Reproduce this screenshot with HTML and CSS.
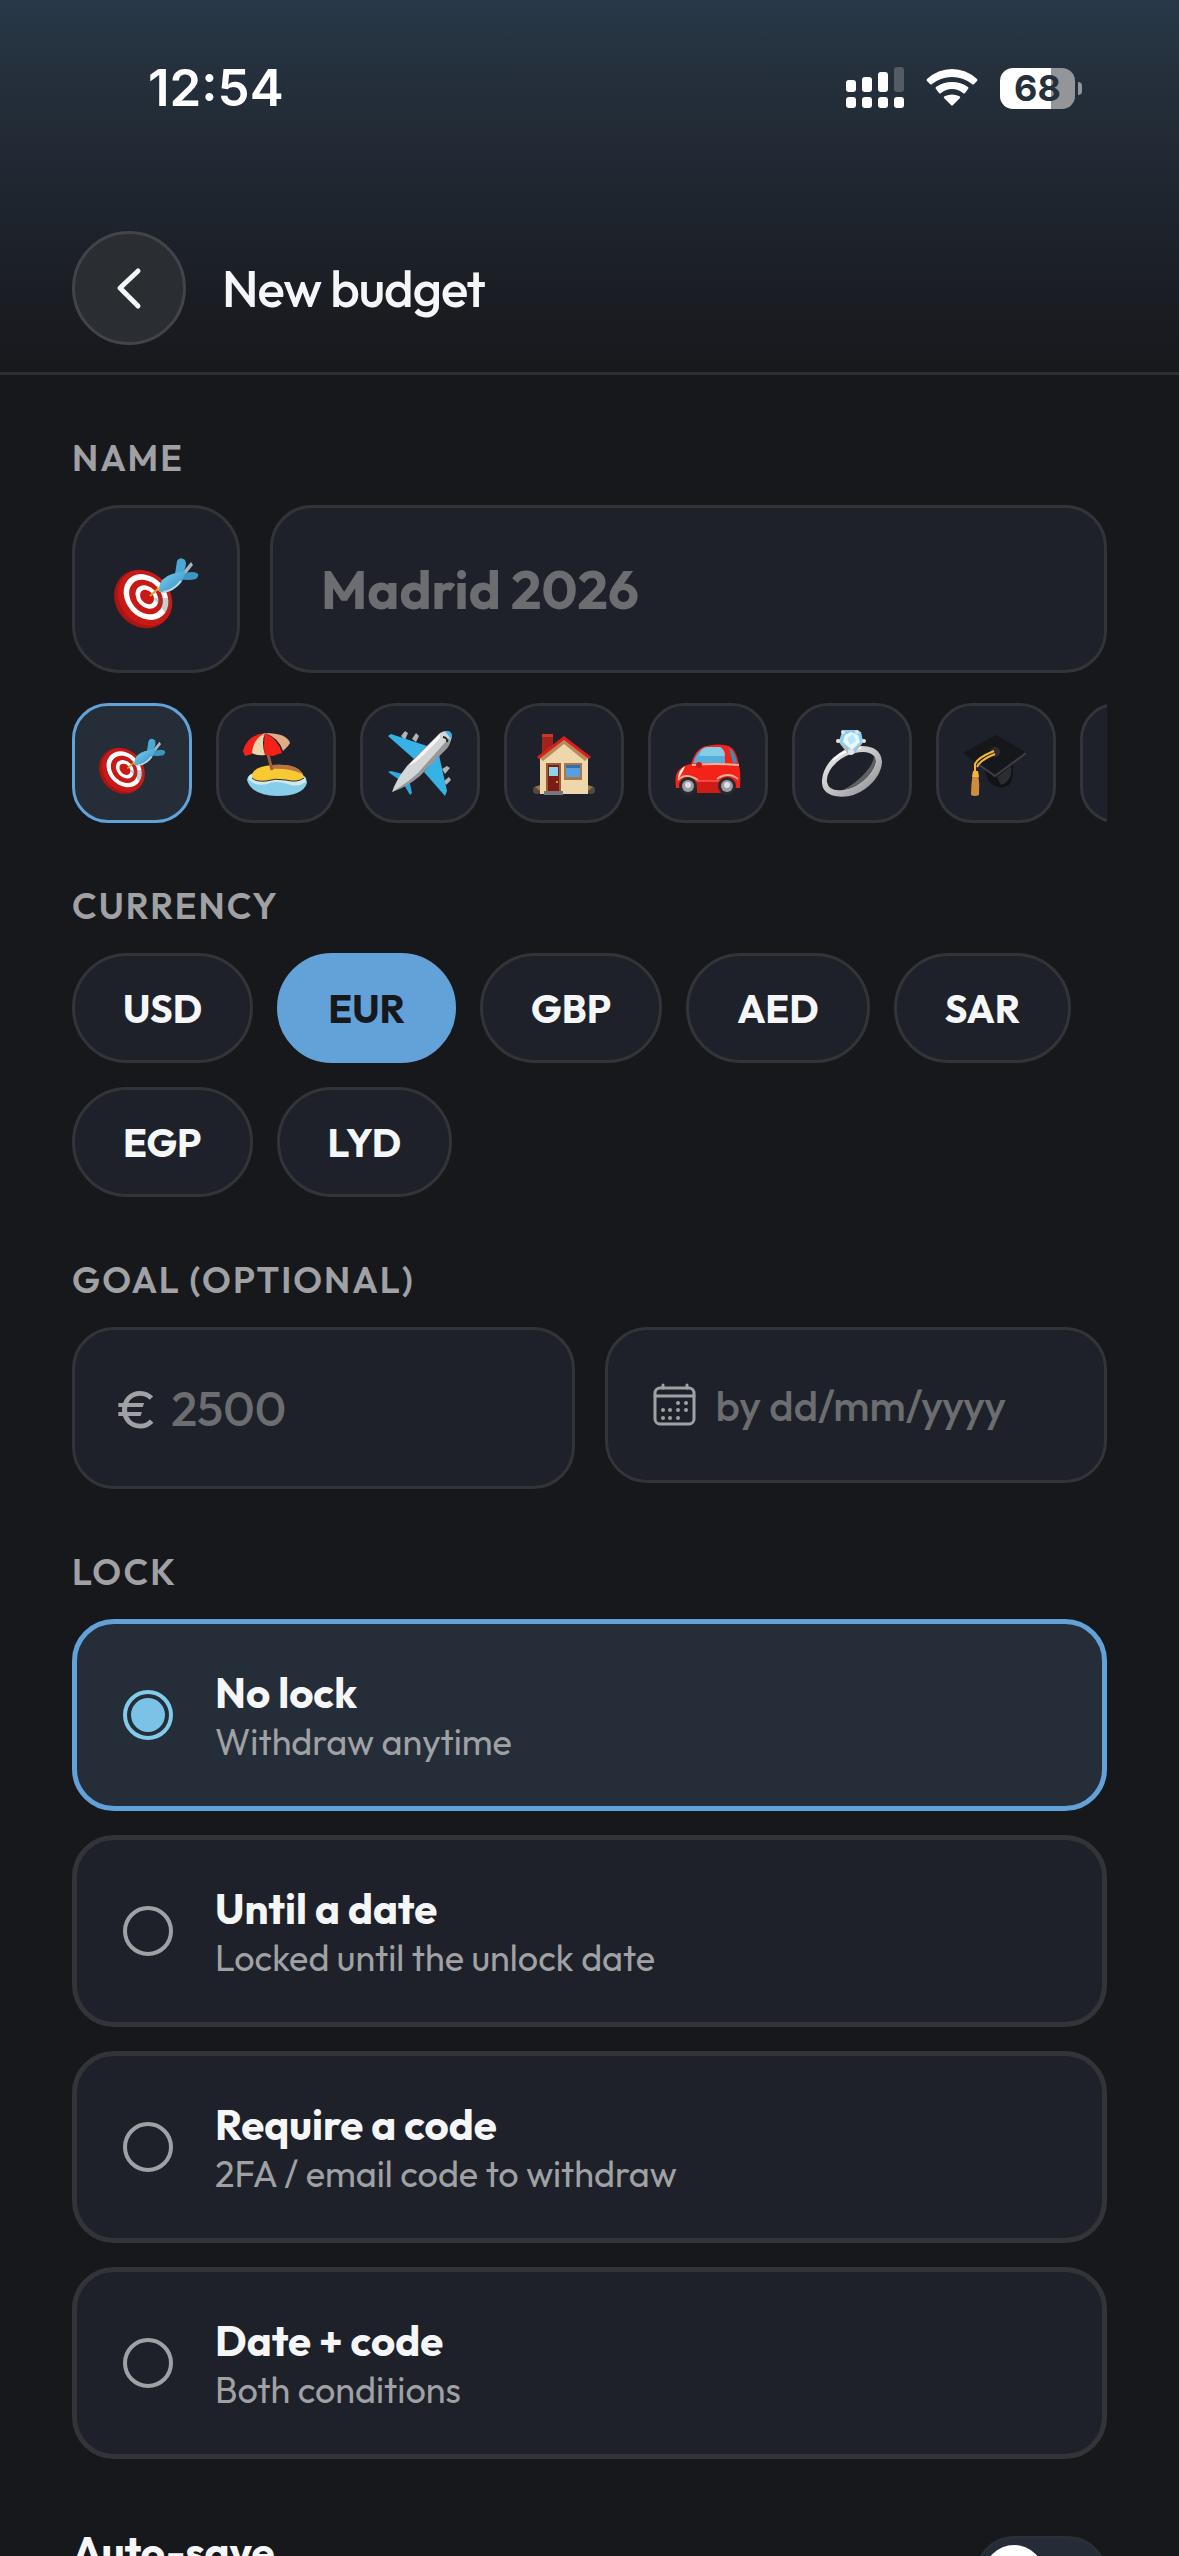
FILE: index.html
```html
<!DOCTYPE html>
<html lang="en">
<head>
  <meta charset="UTF-8">
  <meta name="viewport" content="width=device-width, initial-scale=1.0">
  <title>New budget</title>
  <link rel="stylesheet" href="styles.css">
</head>
<body>
  <!-- Shared icon shapes -->
  <svg class="sprite" aria-hidden="true">
    <defs>
      <linearGradient id="metal" x1="0" y1="0" x2="1" y2="1">
        <stop offset="0" stop-color="#f4f4f4"/>
        <stop offset="0.5" stop-color="#c4c4c6"/>
        <stop offset="1" stop-color="#85868a"/>
      </linearGradient>
      <linearGradient id="dart" x1="0" y1="0" x2="1" y2="1">
        <stop offset="0" stop-color="#7fd0f0"/>
        <stop offset="1" stop-color="#2f8fc4"/>
      </linearGradient>
    </defs>
    <symbol id="icon-target" viewBox="0 0 84 84">
      <ellipse cx="28" cy="53" rx="26" ry="30" transform="rotate(-42 28 53)" fill="#7d1613"/>
      <ellipse cx="29" cy="52" rx="27" ry="31" transform="rotate(-42 29 52)" fill="#a81512"/>
      <ellipse cx="31" cy="51" rx="25" ry="30" transform="rotate(-42 31 51)" fill="#c71a17"/>
      <ellipse cx="32" cy="50" rx="20" ry="25" transform="rotate(-42 32 50)" fill="#fff"/>
      <ellipse cx="32" cy="50" rx="15" ry="19" transform="rotate(-42 32 50)" fill="#c71a17"/>
      <ellipse cx="33" cy="50" rx="10" ry="13" transform="rotate(-42 33 50)" fill="#fff"/>
      <ellipse cx="33" cy="50" rx="6" ry="8" transform="rotate(-42 33 50)" fill="#c71a17"/>
      <path d="M38 51 L57 51 Q58 62 51 66 L46 58Z" fill="#55585e" opacity="0.3"/>
      <path d="M36 49 L45 41" stroke="#dfa02c" stroke-width="2"/>
      <path d="M43 39 L49 45 L45 44Z" fill="#f0b83c" stroke="#f0b83c"/>
      <path d="M61 27 L63 14 Q66 9 71 13 Q74 18 68 27Z" fill="#4aa8d6"/>
      <path d="M68 26 L77 15 L79 18 L71 28Z" fill="#a8b6c2"/>
      <path d="M66 29 Q75 23 83 26 Q86 28 82 32 Q74 34 66 32Z" fill="#3c95c2"/>
      <path d="M45 41 Q46 31 58 27 L71 24 Q71 33 64 39 Q54 48 45 44Z" fill="url(#dart)"/>
      <path d="M49 45 Q59 44 67 34" stroke="#c6d3dc" stroke-width="2" fill="none"/>
    </symbol>
    <symbol id="icon-beach" viewBox="0 0 66 66">
      <path d="M4 50 Q5 43 14 43 H54 Q64 45 64 53 Q60 66 34 66 Q8 65 4 50Z" fill="#87cfe9"/>
      <path d="M5 49 Q6 43 14 43 H54 Q63 45 63 52 Q54 58 45 54 Q32 50 24 54 Q12 57 5 49Z" fill="#d3e9e6"/>
      <path d="M9 47 Q9 36 30 35 Q56 33 61 47 Q54 53 43 50 Q32 48 23 51 Q13 52 9 47Z" fill="#f9c933"/>
      <path d="M28 35 Q54 33 60 44 Q46 38 28 39Z" fill="#b57543"/>
      <path d="M9 48 Q13 52 23 51 Q32 48 43 50 Q54 53 61 48" stroke="#2a2c2c" fill="none"/>
      <path d="M24 20 L29 40" stroke="#a05c3e" stroke-width="3"/>
      <path d="M0 21 Q4 5 22 3 L9 24 L2 26Z" fill="#f52219"/>
      <path d="M22 3 Q20 15 22 25 L30 26 Q35 24 39 23 Q35 9 22 3Z" fill="#f52219"/>
      <path d="M22 3 Q10 9 9 23 Q14 26 22 25 Q18 12 22 3Z" fill="#efd3aa"/>
      <path d="M22 3 Q44 3 47 13 L45 16 L40 21 Q36 8 22 3Z" fill="#e0ab85"/>
    </symbol>
    <symbol id="icon-plane" viewBox="0 0 66 66">
      <path d="M14 6 L18 1 L21 3 L18 10Z M25 9 L29 3 L32 6 L29 12Z M55 39 L60 36 L63 38 L58 44Z M57 51 L62 47 L64 50 L59 55Z" fill="#aeb4b8"/>
      <path d="M1 6 L4 4 L40 16 L27 29Z" fill="#37b2e4"/>
      <path d="M52 25 L60 61 L58 66 L37 42Z" fill="#37b2e4"/>
      <path d="M1 42 L4 41 L20 45 L14 51Z M22 49 L25 63 L23 65 L16 53Z" fill="#2ea8dc"/>
      <path d="M53 3 Q60 -1 64 3 Q66 9 60 18 L32 46 Q17 57 5 62 Q9 50 20 36Z" fill="#d3d5d7"/>
      <path d="M62 8 L31 43 Q20 53 5 62 Q20 57 33 46 L61 17 Q65 11 62 8Z" fill="#95989b"/>
      <path d="M53 4 L22 35 Q27 36 53 8Z" fill="#f7f8f8"/>
      <path d="M58 1 Q62 0 64 3 Q66 6 64 9Z" fill="#37b2e4"/>
      <path d="M56 7 Q61 8 60 12" stroke="#222" stroke-width="2" fill="none"/>
    </symbol>
    <symbol id="icon-house" viewBox="0 0 66 66">
      <circle cx="6" cy="60" r="4" fill="#514b41"/>
      <circle cx="60" cy="60" r="4" fill="#514b41"/>
      <path d="M4 57 L9 55 V61Z M62 57 L57 55 V61Z" fill="#a07246"/>
      <path d="M11 4 H22 V16 L11 26Z" fill="#a4221e"/>
      <path d="M11 4 H22 V7 H11Z" fill="#c9362c"/>
      <path d="M9 28 L33 8 L57 28 V64 H9Z" fill="#efd7ad"/>
      <path d="M9 28 L33 9 L57 28 L54 31 L33 14 L12 31Z" fill="#b98c5c"/>
      <path d="M7 28 L33 8 L59 28" stroke="#d81f1c" stroke-width="3" fill="none"/>
      <path d="M15 33 H30 V63 H15Z" fill="#9b5a33"/>
      <path d="M17 35 H28 V62 H17Z" fill="#7c1c17"/>
      <path d="M18 37 H27 V46 H18Z" fill="#8bd3ee"/>
      <path d="M33 33 H51 V50 H33Z" fill="#a8774a"/>
      <path d="M35 35 H49 V47 H35Z" fill="#579fdd"/>
      <path d="M35 35 H49 V38 H35Z" fill="#2f70b4"/>
      <path d="M13 61 H32 V65 H13Z" fill="#77777c"/>
      <circle cx="26" cy="52" r="1" fill="#f0c14a"/>
    </symbol>
    <symbol id="icon-car" viewBox="0 0 66 66">
      <path d="M16 34 Q21 18 31 16 Q43 13 54 16 Q62 20 64 36 Q66 42 65 58 H1 Q-1 44 4 40 Q9 35 16 34Z" fill="#f5221a"/>
      <path d="M18 33 Q22 20 31 17 H45 Q50 18 50 33Z" fill="#56aeda"/>
      <path d="M26 20 Q29 17 33 17 H45 Q50 20 50 26 H24Z" fill="#83cde9"/>
      <path d="M54 18 Q60 21 62 33 H58Z" fill="#3d8cb3"/>
      <path d="M17 35 Q40 33 64 35" stroke="#ecb59a" stroke-width="2" fill="none"/>
      <path d="M3 49 Q3 40 10 36 L8 41 Q6 45 3 49Z" fill="#f4eedc"/>
      <path d="M22 51 H46 V63 H22Z" fill="#d11b17"/>
      <path d="M22 51 H44" stroke="#f47f74"/>
      <path d="M3 50 Q10 42 23 50 M42 49 Q53 41 63 49" stroke="#e7ae93" stroke-width="2" fill="none"/>
      <circle cx="13" cy="56" r="9" fill="#282a2d"/>
      <circle cx="52" cy="56" r="9" fill="#282a2d"/>
      <circle cx="13" cy="56" r="6" fill="#9b9ea2"/>
      <circle cx="52" cy="56" r="6" fill="#9b9ea2"/>
      <circle cx="13" cy="55" r="3" fill="#dedfe0"/>
      <circle cx="52" cy="55" r="3" fill="#dedfe0"/>
      <circle cx="24" cy="35" r="3" fill="#c91917"/>
    </symbol>
    <symbol id="icon-ring" viewBox="0 0 66 66">
      <path fill-rule="evenodd" d="M14 28 Q26 17 42 16 Q62 16 63 32 Q62 47 46 59 Q32 69 16 66 Q2 63 3 50 Q4 38 14 28Z M18 32 Q7 42 8 52 Q10 62 24 60 Q38 58 49 46 Q60 33 55 26 Q49 20 36 23 Q26 25 18 32Z" fill="url(#metal)"/>
      <path d="M55 26 Q60 33 49 46 Q38 58 24 60 Q36 54 46 43 Q55 33 55 26Z" fill="#5f6064"/>
      <path d="M14 30 Q26 19 42 18" stroke="#fafafa" stroke-width="2" fill="none"/>
      <path d="M18 10 L29 24 H35 L46 10 L43 9 L34 22 H31 L21 9Z" fill="#b7b9bc"/>
      <path d="M23 2 L26 0 H38 L42 2 L44 11 L33 23 L20 11Z" fill="#8bd0f1"/>
      <path d="M26 5 L32 2 L39 5 L41 12 L33 20 L24 12Z" fill="#e8f7fd"/>
      <path d="M28 8 L34 4 L37 11 L31 15Z" fill="#bce6f8"/>
      <g fill="#e3e4e6">
        <circle cx="24" cy="2" r="2"/><circle cx="38" cy="2" r="2"/>
        <circle cx="19" cy="11" r="2"/><circle cx="45" cy="11" r="2"/>
        <circle cx="32" cy="22" r="3"/>
      </g>
    </symbol>
    <symbol id="icon-cap" viewBox="0 0 66 66">
      <path d="M18 31 L49 29 Q52 47 46 55 Q37 61 26 52Z" fill="#121316"/>
      <path d="M34 47 L48 36 Q50 51 38 55Z" fill="#2b2d31"/>
      <path d="M0 23 L33 5 L64 23 L32 47Z" fill="#15171a"/>
      <path d="M12 32 L32 46 L63 23" stroke="#3c3f44" stroke-width="2" fill="none"/>
      <circle cx="32" cy="22" r="5" fill="#2c2e32"/>
      <path d="M31 21 Q14 28 12 34 V48 M32 24 Q17 30 14 37" stroke="#f5b638" stroke-width="2" fill="none"/>
      <path d="M10 43 H15 Q17 54 16 65 Q12 67 8 65 Q8 53 10 43Z" fill="#cf8b3e"/>
      <path d="M10 41 H15 L16 47 H9Z" fill="#f5b638"/>
    </symbol>
  </svg>

  <header class="header">
    <div class="status-bar">
      <span class="time">12:54</span>
      <div class="status-icons">
        <svg width="58" height="42" viewBox="0 0 58 42" fill="#fff" aria-hidden="true">
          <rect x="0" y="13" width="10" height="12" rx="3"/>
          <rect x="16" y="10" width="10" height="15" rx="3"/>
          <rect x="32" y="5" width="10" height="20" rx="3"/>
          <rect x="48" y="0" width="10" height="25" rx="3" fill="#555b64"/>
          <rect x="0" y="30" width="10" height="11" rx="3"/>
          <rect x="16" y="30" width="10" height="11" rx="3"/>
          <rect x="32" y="30" width="10" height="11" rx="3"/>
          <rect x="48" y="30" width="10" height="11" rx="3"/>
        </svg>
        <svg width="52" height="38" viewBox="0 0 52 38" fill="#fff" aria-hidden="true">
          <path d="M1 12 Q0 11 1 10 Q12 0 26 0 Q40 0 51 10 Q52 11 51 12 L48 15 Q47 16 46 15 Q37 8 26 8 Q15 8 6 15 Q5 16 4 15Z"/>
          <path d="M10 20 Q9 19 10 18 Q17 13 26 13 Q35 13 42 18 Q43 19 42 20 L39 24 Q38 25 37 24 Q32 20 26 20 Q20 20 15 24 Q14 25 13 24Z"/>
          <path d="M18 29 Q17 28 19 27 Q26 24 33 27 Q35 28 34 29 L27 36 Q26 37 25 36Z"/>
        </svg>
        <div class="battery"><span class="battery-level">68</span></div>
      </div>
    </div>
    <div class="title-bar">
      <button class="back" type="button" aria-label="Back">
        <svg width="60" height="60" viewBox="0 0 60 60" fill="none" stroke="#f5f6f8" stroke-width="5" stroke-linecap="round" stroke-linejoin="round">
          <path d="M39 13 L21 30 L39 48"/>
        </svg>
      </button>
      <h1>New budget</h1>
    </div>
  </header>

  <form class="form">
    <section class="section">
      <label class="label" for="name">NAME</label>
      <div class="name-group">
        <div class="row">
          <div class="name-icon"><svg width="84" height="84"><use href="#icon-target"/></svg></div>
          <input class="field name-input" type="text" id="name" name="name" placeholder="Madrid 2026">
        </div>
        <div class="chips">
          <button class="chip active" type="button" aria-label="Target"><svg width="66" height="66"><use href="#icon-target"/></svg></button>
          <button class="chip" type="button" aria-label="Beach"><svg width="66" height="66"><use href="#icon-beach"/></svg></button>
          <button class="chip" type="button" aria-label="Plane"><svg width="66" height="66"><use href="#icon-plane"/></svg></button>
          <button class="chip" type="button" aria-label="House"><svg width="66" height="66"><use href="#icon-house"/></svg></button>
          <button class="chip" type="button" aria-label="Car"><svg width="66" height="66"><use href="#icon-car"/></svg></button>
          <button class="chip" type="button" aria-label="Ring"><svg width="66" height="66"><use href="#icon-ring"/></svg></button>
          <button class="chip" type="button" aria-label="Graduation"><svg width="66" height="66"><use href="#icon-cap"/></svg></button>
          <button class="chip" type="button" aria-label="Other"></button>
        </div>
      </div>
    </section>

    <section class="section">
      <h2 class="label">CURRENCY</h2>
      <div class="pills">
        <button class="pill" type="button">USD</button>
        <button class="pill active" type="button">EUR</button>
        <button class="pill" type="button">GBP</button>
        <button class="pill" type="button">AED</button>
        <button class="pill" type="button">SAR</button>
        <button class="pill" type="button">EGP</button>
        <button class="pill" type="button">LYD</button>
      </div>
    </section>

    <section class="section">
      <label class="label" for="goal">GOAL (OPTIONAL)</label>
      <div class="row goal-row">
        <div class="field goal-field amount">
          <span class="symbol">€</span>
          <input type="text" id="goal" name="goal" placeholder="2500">
        </div>
        <div class="field goal-field date">
          <svg width="48" height="48" viewBox="0 0 48 48" fill="none" stroke="#a0a1a4" stroke-width="3" stroke-linecap="round" aria-hidden="true">
            <rect x="5" y="7" width="39" height="36" rx="5"/>
            <path d="M5 15 H44 M13 4 V7 M37 4 V7"/>
            <g fill="#a0a1a4" stroke="none">
              <circle cx="28" cy="22" r="2"/><circle cx="36" cy="22" r="2"/>
              <circle cx="13" cy="29" r="2"/><circle cx="20" cy="29" r="2"/><circle cx="28" cy="29" r="2"/><circle cx="36" cy="29" r="2"/>
              <circle cx="13" cy="37" r="2"/><circle cx="20" cy="37" r="2"/><circle cx="28" cy="37" r="2"/>
            </g>
          </svg>
          <input type="text" id="date" name="date" placeholder="by dd/mm/yyyy" aria-label="Goal date">
        </div>
      </div>
    </section>

    <section class="section">
      <h2 class="label">LOCK</h2>
      <div class="options">
        <label class="option">
          <input type="radio" name="lock" value="none" checked>
          <span class="option-text"><strong>No lock</strong><small>Withdraw anytime</small></span>
        </label>
        <label class="option">
          <input type="radio" name="lock" value="date">
          <span class="option-text"><strong>Until a date</strong><small>Locked until the unlock date</small></span>
        </label>
        <label class="option">
          <input type="radio" name="lock" value="code">
          <span class="option-text"><strong>Require a code</strong><small>2FA / email code to withdraw</small></span>
        </label>
        <label class="option">
          <input type="radio" name="lock" value="both">
          <span class="option-text"><strong>Date + code</strong><small>Both conditions</small></span>
        </label>
      </div>
    </section>

    <section class="autosave">
      <label for="autosave">Auto-save</label>
      <input class="switch" type="checkbox" id="autosave" name="autosave">
    </section>
  </form>
</body>
</html>
```

FILE: styles.css
```css
:root {
  --bg: #17181c;
  --card: #1e2129;
  --border: #323438;
  --accent: #63a1d9;
  --accent-bg: #242d38;
  --text: #f5f6f8;
  --muted: #a0a1a4;
  --placeholder: #6b6d70;
}

* { box-sizing: border-box; }
body {
  margin: 0;
  height: 100vh;
  overflow: hidden;
  background: var(--bg);
  color: var(--text);
  font-family: Outfit, Lato, sans-serif;
}
button, input { font-family: inherit; margin: 0; }
h1, h2 { margin: 0; }
.sprite { position: absolute; width: 0; height: 0; }
svg { display: block; flex: none; }
svg, symbol { overflow: visible; }

/* Header */
.header {
  background: linear-gradient(#273849 0, #25303c 70px, #1f2630 190px, #1a1c22 310px, #17191d 372px);
  border-bottom: 3px solid #2d2f34;
  padding-bottom: 27px;
}
.status-bar {
  display: flex;
  justify-content: space-between;
  align-items: center;
  padding: 57px 97px 0 148px;
  height: 119px;
  margin-bottom: 112px;
}
.time { font: 600 51px/62px Inter, sans-serif; color: #fff; }
.status-icons { display: flex; align-items: center; gap: 22px; }
.battery {
  position: relative;
  width: 75px;
  height: 41px;
  margin-right: 7px;
  border-radius: 13px;
  background: linear-gradient(90deg, #fff 68%, #939599 68%);
  text-align: center;
}
.battery::after {
  content: "";
  position: absolute;
  left: 78px;
  top: 14px;
  width: 4px;
  height: 13px;
  border-radius: 0 4px 4px 0;
  background: #939599;
}
.battery-level { font: 700 36px/41px Inter, sans-serif; color: #25303c; }
.title-bar { display: flex; align-items: center; gap: 36px; padding: 0 72px; }
.title-bar h1 { font-size: 51px; font-weight: 500; line-height: 64px; letter-spacing: -1px; }
.back {
  display: flex;
  align-items: center;
  justify-content: center;
  width: 114px;
  height: 114px;
  padding: 0;
  border: 3px solid #414448;
  border-radius: 50%;
  background: #2a2d31;
}

/* Form */
.form { display: flex; flex-direction: column; gap: 60px; padding: 60px 72px; }
.section { display: flex; flex-direction: column; gap: 24px; }
.label {
  font-size: 36px;
  font-weight: 600;
  line-height: 46px;
  letter-spacing: 2px;
  color: var(--muted);
}
.row { display: flex; gap: 30px; }
.field {
  border: 3px solid var(--border);
  border-radius: 42px;
  background: var(--card);
  color: var(--text);
}
input::placeholder { color: var(--placeholder); opacity: 1; }

.name-group { display: flex; flex-direction: column; gap: 30px; }
.name-icon {
  display: flex;
  align-items: center;
  justify-content: center;
  width: 168px;
  height: 168px;
  border: 3px solid var(--border);
  border-radius: 48px;
  background: var(--card);
}
.name-input { flex: 1; min-width: 0; padding: 0 48px; font-size: 54px; font-weight: 700; }
.chips { display: flex; gap: 24px; overflow: hidden; }
.chip {
  display: flex;
  align-items: center;
  justify-content: center;
  flex: none;
  width: 120px;
  height: 120px;
  padding: 0;
  border: 3px solid var(--border);
  border-radius: 36px;
  background: var(--card);
}
.chip.active { border-color: var(--accent); background: var(--accent-bg); }

.pills { display: flex; flex-wrap: wrap; gap: 24px; }
.pill {
  height: 110px;
  padding: 0 48px;
  border: 3px solid var(--border);
  border-radius: 55px;
  background: var(--card);
  color: var(--text);
  font-size: 39px;
  font-weight: 700;
}
.pill.active { background: var(--accent); border-color: var(--accent); color: var(--bg); }

.goal-row { align-items: flex-start; }
.goal-field { display: flex; align-items: center; flex: 1; min-width: 0; padding: 0 42px; }
.goal-field input {
  flex: 1;
  min-width: 0;
  padding: 0;
  border: 0;
  background: none;
  color: var(--text);
  font-weight: 500;
}
.amount { height: 162px; gap: 15px; }
.amount input { font-size: 48px; }
.symbol { font-size: 54px; font-weight: 400; color: var(--muted); }
.date { height: 156px; gap: 18px; }
.date input { font-size: 42px; }

/* Lock options */
.options { display: flex; flex-direction: column; gap: 24px; }
.option {
  display: flex;
  align-items: center;
  gap: 42px;
  padding: 42px 46px;
  border: 5px solid var(--border);
  border-radius: 42px;
  background: var(--card);
}
.option:has(input:checked) { border-color: var(--accent); background: var(--accent-bg); }
.option input {
  appearance: none;
  flex: none;
  width: 50px;
  height: 50px;
  padding: 4px;
  border: 4px solid var(--muted);
  border-radius: 50%;
}
.option input:checked {
  border-color: #82cbea;
  background: #7cc2e6 content-box;
}
.option-text { display: flex; flex-direction: column; }
.option-text strong { font-size: 42px; font-weight: 700; line-height: 53px; }
.option-text small { font-size: 36px; line-height: 45px; color: var(--muted); }

/* Auto-save */
.autosave { display: flex; justify-content: space-between; align-items: flex-start; padding-top: 6px; }
.autosave label { font-size: 42px; font-weight: 700; line-height: 54px; }
.switch {
  appearance: none;
  display: flex;
  width: 132px;
  height: 78px;
  margin-top: 11px;
  padding: 6px;
  border: 3px solid #2b2f35;
  border-radius: 39px;
  background: #242d37;
}
.switch::before {
  content: "";
  width: 60px;
  height: 60px;
  border-radius: 50%;
  background: #fff;
}
```
